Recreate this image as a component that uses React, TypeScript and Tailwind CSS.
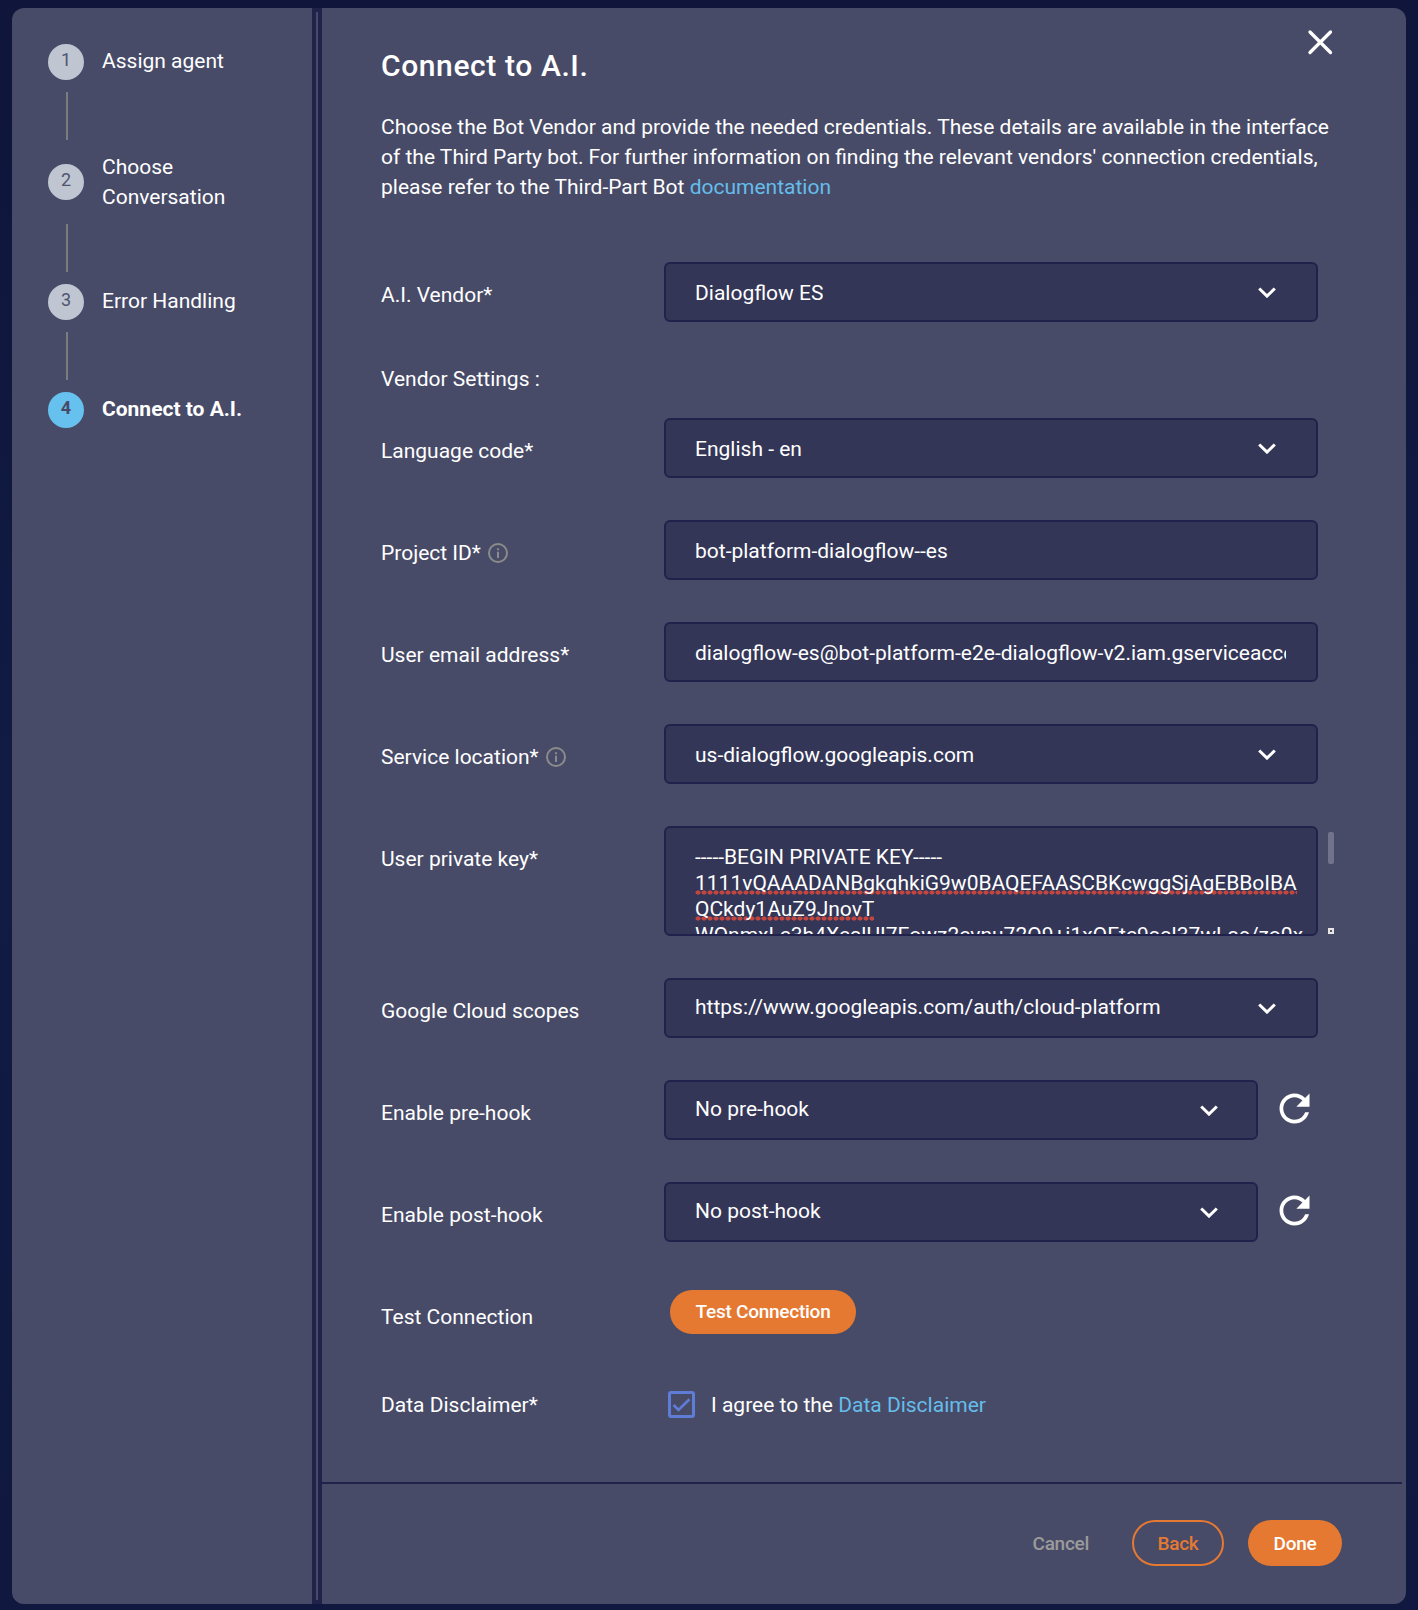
import type { ReactNode } from 'react';

function Chevron() {
  return (
    <svg width="18" height="11" viewBox="0 0 18 11" fill="none" stroke="#fff" strokeWidth="3">
      <path d="M1.2 1.5 9 9.1 16.8 1.5" />
    </svg>
  );
}

function Info() {
  return (
    <svg className="-mt-px" width="20" height="20" viewBox="0 0 20 20" fill="none" stroke="#8b8b8b">
      <circle cx="10" cy="10" r="9" strokeWidth="2" />
      <path d="M10 8.8V15M10 5.2v2" strokeWidth="2" />
    </svg>
  );
}

function Refresh() {
  return (
    <svg className="ml-[14px] mt-1.5 shrink-0" width="45" height="45" viewBox="0 0 24 24" fill="#fff">
      <path d="M17.65 6.35C16.2 4.9 14.21 4 12 4c-4.42 0-7.99 3.58-7.99 8s3.57 8 7.99 8c3.73 0 6.84-2.55 7.73-6h-2.08c-.82 2.33-3.04 4-5.65 4-3.31 0-6-2.69-6-6s2.69-6 6-6c1.66 0 3.14.69 4.22 1.78L13 11h7V4l-2.35 2.35z" />
    </svg>
  );
}

function Step({ n, label, active, last }: { n: number; label: string; active?: boolean; last?: boolean }) {
  const two = label.includes(' C');
  return (
    <>
      <div className={two ? 'flex h-[60px] items-center' : 'flex h-9 items-center'}>
        <div
          className={
            active
              ? 'flex size-9 shrink-0 items-start justify-center rounded-full bg-[#67c1ee] pt-1 text-[18px] leading-6 font-bold text-[#474b67]'
              : 'flex size-9 shrink-0 items-start justify-center rounded-full bg-[#bfc6d1] pt-1 text-[18px] leading-6 text-[#50546f]'
          }
        >
          {n}
        </div>
        <div
          className={
            two
              ? 'ml-[18px] w-[140px] leading-[30px]'
              : active
                ? 'ml-[18px] pb-0.5 leading-[30px] font-bold'
                : 'ml-[18px] pb-0.5 leading-[30px]'
          }
        >
          {label}
        </div>
      </div>
      {!last && <div className="my-3 ml-[18px] h-12 w-0.5 bg-[#7d7c7c]" />}
    </>
  );
}

function Row({ label, info, children, className = 'mb-[42px]' }: { label: string; info?: boolean; children: ReactNode; className?: string }) {
  return (
    <div className={`flex items-start ${className}`}>
      <div className="flex w-[283px] shrink-0 items-center gap-[7px] pt-[18px] leading-[30px]">
        {label}
        {info && <Info />}
      </div>
      {children}
    </div>
  );
}

function Field({ value, select, high, narrow }: { value: string; select?: boolean; high?: boolean; narrow?: boolean }) {
  return (
    <div
      className={`flex h-[60px] shrink-0 items-start justify-between rounded-md border-2 border-[#20224b] bg-[#343657] pl-[29px] ${narrow ? 'w-[594px] pr-[38px]' : select ? 'w-[654px] pr-10' : 'w-[654px] pr-[30px]'}`}
    >
      <div className={`overflow-hidden leading-[30px] whitespace-nowrap ${high ? 'mt-3' : 'mt-[14px]'}`}>{value}</div>
      {select && (
        <div className="mt-[23px] shrink-0">
          <Chevron />
        </div>
      )}
    </div>
  );
}

function Misspelt({ children }: { children: ReactNode }) {
  return (
    <span className="bg-[radial-gradient(ellipse_2.9px_2.4px_at_center,#c2463f_75%,transparent_100%)] bg-[length:6px_5px] bg-[position:0_100%] bg-repeat-x">
      {children}
    </span>
  );
}

export default function App() {
  return (
    <div className="h-[1610px] w-[1418px] bg-linear-to-b from-[#0f153b] via-[#111b43] to-[#10183f] px-3 pt-2 pb-1.5 font-[Roboto,sans-serif] text-[21px] text-white">
      <div className="flex h-[1596px] overflow-hidden rounded-xl bg-[#484b67]">
        <aside className="w-[300px] shrink-0 pt-9 pl-9">
          <Step n={1} label="Assign agent" />
          <Step n={2} label="Choose Conversation" />
          <Step n={3} label="Error Handling" />
          <Step n={4} label="Connect to A.I." active last />
        </aside>
        <div className="flex w-2.5 shrink-0 justify-center bg-[#20224a] py-1">
          <div className="w-0.5 bg-[#484b67]" />
        </div>

        <main className="relative flex flex-1 flex-col">
          <button className="absolute top-[21px] right-[73px]" aria-label="Close">
            <svg width="26" height="26" viewBox="0 0 26 26" stroke="#fff" strokeWidth="3.3" strokeLinecap="round">
              <path d="M3 3l20.5 20.5M23.5 3L3 23.5" />
            </svg>
          </button>

          <div className="h-[1474px] pt-[38px] pl-[59px]">
            <h1 className="text-[30px] leading-10 font-medium tracking-[0.6px]">Connect to A.I.</h1>
            <p className="mt-[26px] mb-[60px] w-[960px] leading-[30px]">
              Choose the Bot Vendor and provide the needed credentials. These details are available in the interface
              <br />
              of the Third Party bot. For further information on finding the relevant vendors' connection credentials,
              <br />
              please refer to the Third-Part Bot <a className="text-[#65bdeb]">documentation</a>
            </p>

            <Row label="A.I. Vendor*">
              <Field value="Dialogflow ES" select />
            </Row>
            <div className="mb-6 leading-[30px]">Vendor Settings :</div>
            <Row label="Language code*">
              <Field value="English - en" select />
            </Row>
            <Row label="Project ID*" info>
              <Field value="bot-platform-dialogflow--es" />
            </Row>
            <Row label="User email address*">
              <Field value="dialogflow-es@bot-platform-e2e-dialogflow-v2.iam.gserviceaccount.com" />
            </Row>
            <Row label="Service location*" info>
              <Field value="us-dialogflow.googleapis.com" select />
            </Row>
            <Row label="User private key*">
              <div className="h-[110px] w-[654px] shrink-0 overflow-hidden rounded-md border-2 border-[#20224b] bg-[#343657] pt-4 pl-[29px] leading-[26px] whitespace-nowrap">
                <div>-----BEGIN PRIVATE KEY-----</div>
                <div>
                  <Misspelt>1111vQAAADANBgkqhkiG9w0BAQEFAASCBKcwggSjAgEBBoIBA</Misspelt>
                </div>
                <div>
                  <Misspelt>QCkdy1AuZ9JnovT</Misspelt>
                </div>
                <div>WQnmxLc3h4XcalUI7Eowz2cvnu72Q9+i1xQEtc9aal37wLae/zo0x</div>
              </div>
              <div className="ml-2.5 flex h-[108px] w-1.5 flex-col justify-between pt-1.5">
                <div className="h-8 w-1.5 rounded-[2px] bg-[#71728b]" />
                <div className="flex size-1.5 items-center justify-center bg-[#e6e6e6]">
                  <div className="size-0.5 bg-[#555]" />
                </div>
              </div>
            </Row>
            <Row label="Google Cloud scopes">
              <Field value="https://www.googleapis.com/auth/cloud-platform" select high />
            </Row>
            <Row label="Enable pre-hook">
              <Field value="No pre-hook" select high narrow />
              <Refresh />
            </Row>
            <Row label="Enable post-hook" className="mb-[42px]">
              <Field value="No post-hook" select high narrow />
              <Refresh />
            </Row>
            <Row label="Test Connection" className="mb-[38px]">
              <button className="mt-1.5 ml-1.5 h-11 w-[186px] rounded-full bg-[#e57932] text-[19px] font-medium tracking-[-0.25px]">
                Test Connection
              </button>
            </Row>
            <Row label="Data Disclaimer*" className="">
              <div className="flex items-center pt-[18px] leading-[30px]">
                <svg className="mr-4 mb-0.5 ml-1" width="27" height="27" viewBox="0 0 27 27" fill="none" stroke="#5f7cd6" strokeWidth="3">
                  <rect x="1.5" y="1.5" width="24" height="24" rx="1.5" />
                  <path d="M5.5 14l5 5L21.5 8.2" strokeWidth="2.6" />
                </svg>
                <span>
                  I agree to the <a className="text-[#65bdeb]">Data Disclaimer</a>
                </span>
              </div>
            </Row>
          </div>

          <footer className="mr-1 flex flex-1 items-start justify-end border-t-2 border-[#20224a] pt-9 pr-[60px] text-[19px] font-medium tracking-[-0.28px]">
            <button className="mr-[43px] h-[46px] pt-0.5 text-[#9b9b9b]">Cancel</button>
            <button className="mr-6 h-[46px] w-[92px] rounded-full border-2 border-[#e57932] pt-0.5 text-[#e57932]">Back</button>
            <button className="h-[46px] w-[94px] rounded-full bg-[#e57932] pt-0.5">Done</button>
          </footer>
        </main>
      </div>
    </div>
  );
}
